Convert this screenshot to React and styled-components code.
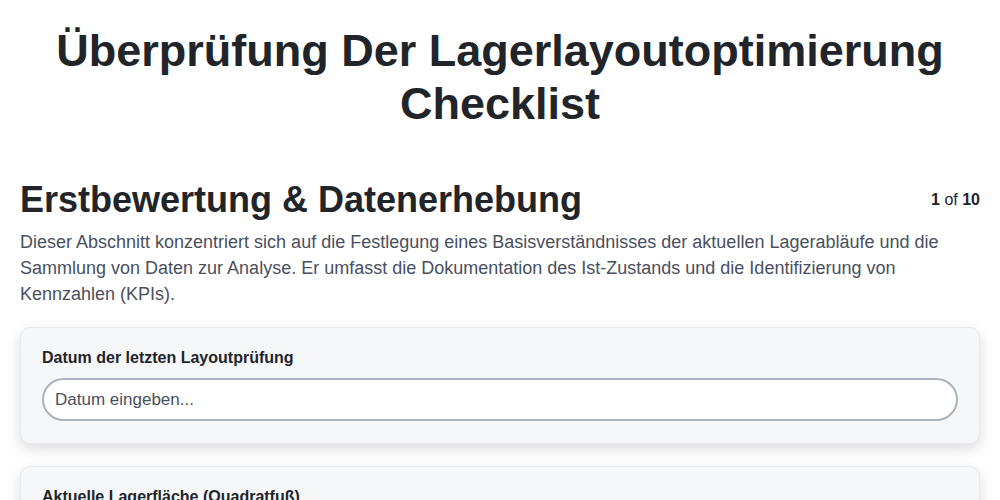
import styled, { createGlobalStyle } from "styled-components";

const Global = createGlobalStyle`
  body {
    margin: 0;
    background: #ffffff;
    font-family: "Liberation Sans", Arial, sans-serif;
    color: #212529;
  }
  * { box-sizing: border-box; }
`;

const Page = styled.div`
  padding: 25px 20px 20px;
`;

const Title = styled.h1`
  margin: 0 0 48px;
  text-align: center;
  font-size: 45px;
  line-height: 52.5px;
  font-weight: 700;
  color: #212529;
`;

const SectionHead = styled.div`
  display: flex;
  justify-content: space-between;
  align-items: center;
`;

const SectionTitle = styled.h2`
  margin: 0;
  font-size: 36px;
  line-height: 1.2;
  font-weight: 700;
  color: #212529;
`;

const Counter = styled.span`
  font-size: 16px;
  color: #212529;
  b { font-weight: 700; }
`;

const Desc = styled.p`
  margin: 8px 0 20px;
  font-size: 18px;
  line-height: 26px;
  color: #4a4f5e;
`;

const Card = styled.div`
  background: #f6f7f9;
  border: 1px solid #e7e9ee;
  border-radius: 10px;
  box-shadow: 0 5px 14px rgba(0, 0, 0, 0.14);
  padding: 21px 21px 22px;
  margin-bottom: 22px;
`;

const Label = styled.label`
  display: block;
  font-size: 16px;
  font-weight: 700;
  color: #212529;
  margin-bottom: 11px;
`;

const Input = styled.input`
  display: block;
  width: 100%;
  height: 43px;
  border: 2px solid #adb3bc;
  border-radius: 22px;
  background: #ffffff;
  padding: 0 11px;
  font-family: "Liberation Sans", Arial, sans-serif;
  font-size: 17px;
  color: #212529;
  outline: none;
  &::placeholder { color: #4a4f5e; }
`;

const fields = [
  { label: "Datum der letzten Layoutprüfung", placeholder: "Datum eingeben..." },
  { label: "Aktuelle Lagerfläche (Quadratfuß)", placeholder: "Fläche eingeben..." },
];

export default function App() {
  return (
    <>
      <Global />
      <Page>
        <Title>Überprüfung Der Lagerlayoutoptimierung Checklist</Title>
        <SectionHead>
          <SectionTitle>Erstbewertung &amp; Datenerhebung</SectionTitle>
          <Counter>
            <b>1</b> of <b>10</b>
          </Counter>
        </SectionHead>
        <Desc>
          Dieser Abschnitt konzentriert sich auf die Festlegung eines Basisverständnisses der
          aktuellen Lagerabläufe und die Sammlung von Daten zur Analyse. Er umfasst die
          Dokumentation des Ist-Zustands und die Identifizierung von Kennzahlen (KPIs).
        </Desc>
        {fields.map((f) => (
          <Card key={f.label}>
            <Label>{f.label}</Label>
            <Input placeholder={f.placeholder} />
          </Card>
        ))}
      </Page>
    </>
  );
}
